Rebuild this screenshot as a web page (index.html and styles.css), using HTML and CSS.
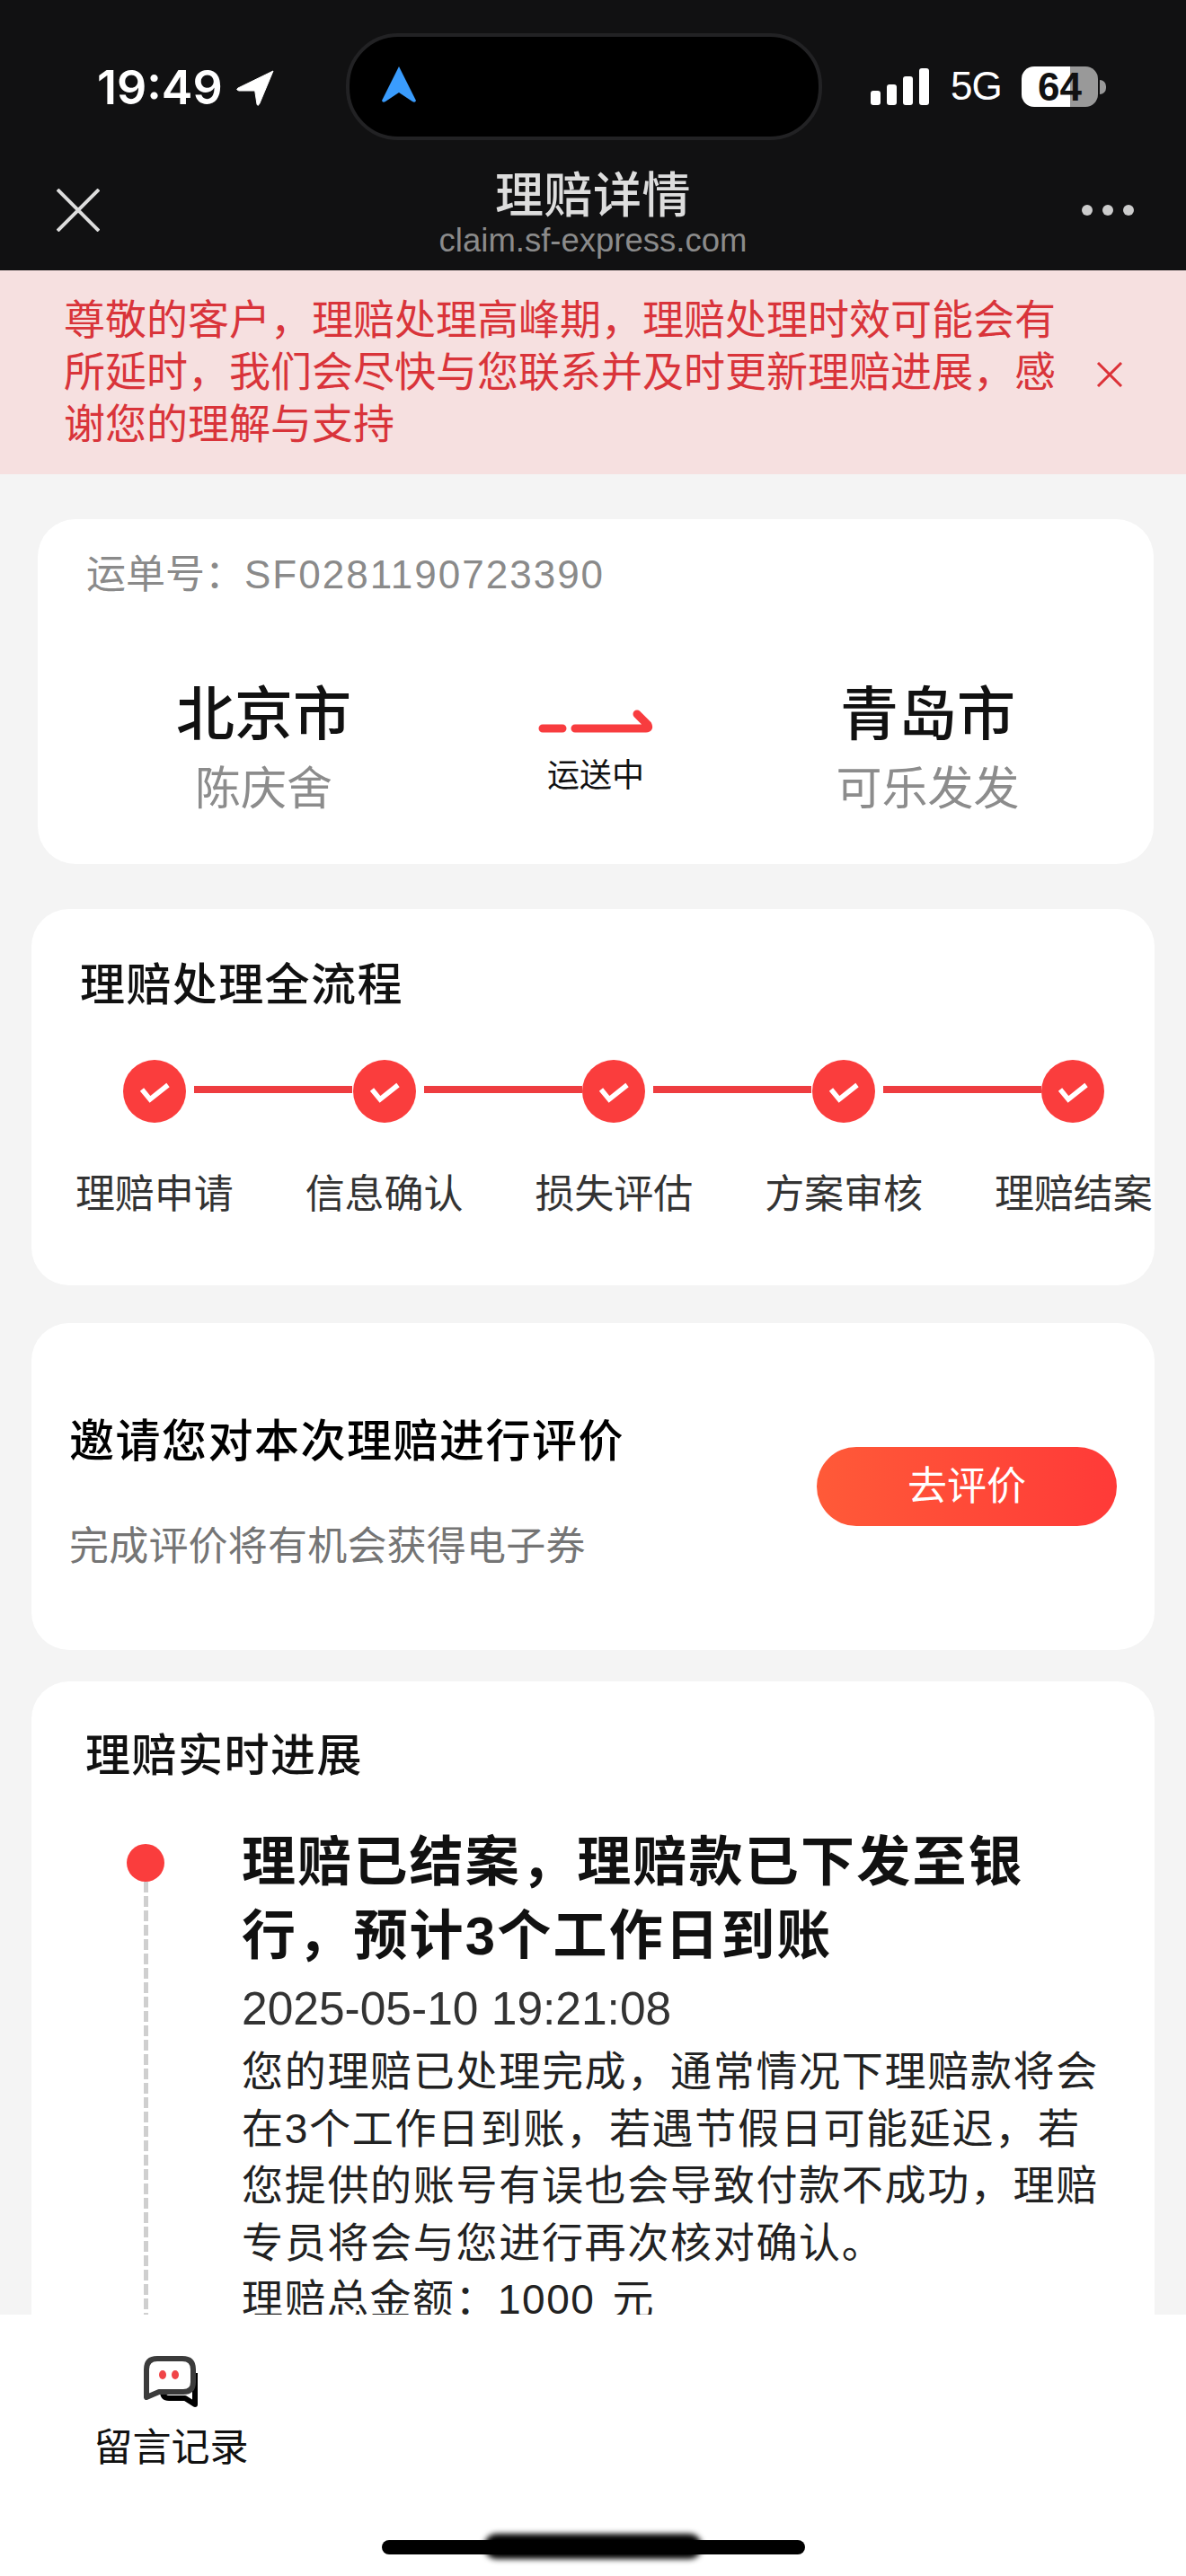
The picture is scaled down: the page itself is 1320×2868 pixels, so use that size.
FILE: index.html
```html
<!DOCTYPE html>
<html lang="zh-CN">
<head>
<meta charset="utf-8">
<title>理赔详情</title>
<link rel="stylesheet" href="styles.css">
</head>
<body>
<div class="app">
  <header class="top">
    <div class="status">
      <div class="status-left">
        <span class="time">19:49</span>
        <svg class="loc" viewBox="0 0 42 40"><path d="M41 1 L2 20 Q-1 22 3 23 L20 23 Q21 23 21 25 L23 38 Q24 41 26 37 Z" fill="#fff" stroke="#fff" stroke-width="1" stroke-linejoin="round"/></svg>
      </div>
      <div class="island">
        <svg class="nav-arrow" viewBox="0 0 38 41"><path d="M19 0 L38 38 Q37 41 34 39 L19 29 L4 39 Q1 41 0 38 Z" fill="#3a9cfd"/></svg>
      </div>
      <div class="status-right">
        <div class="signal"><i class="b1"></i><i class="b2"></i><i class="b3"></i><i class="b4"></i></div>
        <span class="net">5G</span>
        <div class="battery"><span class="batt-num">64</span></div>
        <div class="batt-nub"></div>
      </div>
    </div>
    <div class="navbar">
      <svg class="nav-close" viewBox="0 0 48 48"><path d="M1 1 L47 47 M47 1 L1 47" stroke="#ddd" stroke-width="4" fill="none"/></svg>
      <div class="nav-title">
        <div class="nav-name">理赔详情</div>
        <div class="nav-url">claim.sf-express.com</div>
      </div>
      <div class="nav-more"><i></i><i></i><i></i></div>
    </div>
  </header>

  <main class="main">
    <section class="notice">
      <p class="notice-text">尊敬的客户，理赔处理高峰期，理赔处理时效可能会有所延时，我们会尽快与您联系并及时更新理赔进展，感谢您的理解与支持</p>
      <svg class="notice-close" viewBox="0 0 30 28"><path d="M2 1 L28 27 M28 1 L2 27" stroke="#dc3238" stroke-width="3" fill="none"/></svg>
    </section>

    <section class="card card-way">
      <div class="waybill">运单号：<span class="waybill-no">SF0281190723390</span></div>
      <div class="route">
        <div class="place">
          <div class="city">北京市</div>
          <div class="person">陈庆舍</div>
        </div>
        <div class="transit">
          <svg class="transit-arrow" viewBox="0 0 128 30"><path d="M5 22 H27 M41 22 H120 Q124 22 122 18 L110 6" stroke="#f83c3f" stroke-width="9" stroke-linecap="round" stroke-linejoin="round" fill="none"/></svg>
          <div class="transit-text">运送中</div>
        </div>
        <div class="place">
          <div class="city">青岛市</div>
          <div class="person">可乐发发</div>
        </div>
      </div>
    </section>

    <section class="card card-flow">
      <h2 class="flow-title">理赔处理全流程</h2>
      <div class="flow-track">
        <span class="step-dot"><svg viewBox="0 0 70 70"><path d="M21 33 L30 44 L50 28" stroke="#fff" stroke-width="5.5" fill="none"/></svg></span><span class="step-line"></span>
        <span class="step-dot"><svg viewBox="0 0 70 70"><path d="M21 33 L30 44 L50 28" stroke="#fff" stroke-width="5.5" fill="none"/></svg></span><span class="step-line"></span>
        <span class="step-dot"><svg viewBox="0 0 70 70"><path d="M21 33 L30 44 L50 28" stroke="#fff" stroke-width="5.5" fill="none"/></svg></span><span class="step-line"></span>
        <span class="step-dot"><svg viewBox="0 0 70 70"><path d="M21 33 L30 44 L50 28" stroke="#fff" stroke-width="5.5" fill="none"/></svg></span><span class="step-line"></span>
        <span class="step-dot"><svg viewBox="0 0 70 70"><path d="M21 33 L30 44 L50 28" stroke="#fff" stroke-width="5.5" fill="none"/></svg></span>
      </div>
      <div class="flow-labels">
        <span>理赔申请</span><span>信息确认</span><span>损失评估</span><span>方案审核</span><span>理赔结案</span>
      </div>
    </section>

    <section class="card card-rate">
      <div class="rate-text">
        <div class="rate-title">邀请您对本次理赔进行评价</div>
        <div class="rate-sub">完成评价将有机会获得电子券</div>
      </div>
      <div class="rate-btn">去评价</div>
    </section>

    <section class="card card-progress">
      <h2 class="progress-title">理赔实时进展</h2>
      <div class="timeline">
        <div class="rail"><span class="rail-dot"></span><span class="rail-line"></span></div>
        <div class="event">
          <div class="event-head">理赔已结案，理赔款已下发至银行，预计3个工作日到账</div>
          <div class="event-time">2025-05-10 19:21:08</div>
          <p class="event-body">您的理赔已处理完成，通常情况下理赔款将会在3个工作日到账，若遇节假日可能延迟，若您提供的账号有误也会导致付款不成功，理赔专员将会与您进行再次核对确认。</p>
          <div class="event-amount">理赔总金额：<span class="amount-value">1000 元</span></div>
        </div>
      </div>
    </section>
  </main>

  <footer class="foot">
    <div class="tab">
      <svg class="tab-icon" viewBox="0 0 62 60">
        <path d="M57 20 V55 L46 48 H28 Q21 48 21 40" stroke="#000" stroke-width="6" fill="none" stroke-linejoin="round"/>
        <path d="M15 4 H43 Q55 4 55 16 V30 Q55 41 44 41 H17 L3 47 V16 Q3 4 15 4 Z" stroke="#3b3b3b" stroke-width="6" fill="#fff" stroke-linejoin="round"/>
        <ellipse cx="21" cy="22" rx="4" ry="5" fill="#f04548"/>
        <ellipse cx="35" cy="22" rx="4" ry="5" fill="#f04548"/>
      </svg>
      <span class="tab-label">留言记录</span>
    </div>
    <div class="home-bar"><span class="home-blur"></span></div>
  </footer>
</div>
</body>
</html>
```
FILE: styles.css
```css
* { box-sizing: border-box; }
html, body { margin: 0; padding: 0; }
body {
  width: 1320px;
  height: 2868px;
  overflow: hidden;
  background: #fff;
  font-family: "Liberation Sans", "Noto Sans CJK SC", sans-serif;
  color: #111;
}
h2, p { margin: 0; font-weight: inherit; }
i { display: block; }

.app { display: flex; flex-direction: column; height: 2868px; }

/* header */
.top { height: 301px; flex: none; background: #111112; color: #fff; }
.status { height: 188px; display: flex; align-items: flex-start; position: relative; }
.status-left { width: 385px; padding: 70px 0 0 108px; display: flex; gap: 13px; align-items: flex-start; }
.time { font-family: Inter, "Liberation Sans", sans-serif; font-size: 52px; line-height: 56px; font-weight: 600; width: 142px; white-space: nowrap; }
.loc { width: 42px; height: 40px; margin-top: 8px; flex: none; }
.island {
  width: 530px; height: 119px; margin-top: 37px; flex: none;
  background: #000; border: 4px solid #222224; border-radius: 58px;
  padding: 33px 0 0 36px;
}
.nav-arrow { display: block; width: 38px; height: 41px; }
.status-right { flex: 1; display: flex; align-items: flex-start; padding: 74px 0 0 54px; }
.signal { display: flex; gap: 7px; align-items: flex-end; height: 43px; width: 65px; flex: none; }
.signal i { width: 11px; background: #fff; border-radius: 3px; }
.b1 { height: 16px; }
.b2 { height: 23px; }
.b3 { height: 32px; }
.b4 { height: 41px; }
.net { margin-left: 24px; font-size: 44px; line-height: 44px; letter-spacing: -1px; width: 55px; flex: none; }
.battery {
  width: 85px; height: 45px; margin-left: 24px; flex: none; border-radius: 14px;
  background: linear-gradient(90deg, #fff 0, #fff 54px, #999 54px, #999 100%);
  text-align: center; color: #111; font-size: 44px; line-height: 45px; font-weight: 700;
}
.batt-num { display: block; }
.batt-nub { width: 7px; height: 16px; margin: 15px 0 0 2px; background: #999; border-radius: 0 8px 8px 0; flex: none; }

.navbar { height: 113px; position: relative; display: flex; }
.nav-close { position: absolute; left: 63px; top: 22px; width: 48px; height: 48px; }
.nav-title { flex: 1; text-align: center; }
.nav-name { font-size: 54px; line-height: 60px; height: 60px; color: #ddd; font-weight: 500; letter-spacing: 0.5px; }
.nav-url { font-size: 36.5px; line-height: 40px; color: #8b8b8b; }
.nav-more { position: absolute; left: 1204px; top: 40px; display: flex; gap: 11px; }
.nav-more i { width: 12px; height: 12px; border-radius: 50%; background: #ccc; }

/* scrolling content */
.main { height: 2276px; flex: none; overflow: hidden; background: #f4f4f4; }
.notice { height: 227px; background: #f6e0e0; display: flex; padding: 26px 0 0 71px; }
.notice-text { width: 1115px; font-size: 46px; line-height: 58px; color: #d9343a; flex: none; }
.notice-close { width: 30px; height: 28px; margin: 76px 0 0 34px; flex: none; }

.card { background: #fff; border-radius: 42px; margin: 0 35px 0 35px; }

.card-way { margin: 50px 36px 0 42px; height: 384px; padding-top: 32px; }
.waybill { padding-left: 54px; font-size: 44px; line-height: 60px; color: #8a8a8a; }
.waybill-no { letter-spacing: 2px; }
.route { display: grid; grid-template-columns: 1fr 236px 1fr; margin-top: 86px; }
.place { text-align: center; }
.city { font-size: 65px; line-height: 80px; font-weight: 500; color: #111; }
.person { font-size: 51px; line-height: 60px; margin-top: 13px; color: #8c8c8c; }
.transit { text-align: center; padding-top: 33px; }
.transit-arrow { display: block; width: 128px; height: 30px; margin: 0 auto 0 54px; }
.transit-text { font-size: 36px; line-height: 44px; margin-top: 23px; color: #111; }

.card-flow { margin-top: 50px; height: 419px; padding-top: 55px; }
.flow-title { padding-left: 54px; font-size: 50px; line-height: 60px; font-weight: 500; color: #111; letter-spacing: 1.4px; }
.flow-track { display: flex; align-items: flex-start; padding-left: 102px; margin-top: 53px; height: 70px; }
.step-dot { width: 70px; height: 70px; border-radius: 50%; background: #fa3d3d; flex: none; }
.step-dot svg { display: block; width: 70px; height: 70px; }
.step-line { width: 176px; height: 8px; margin: 29px 0 0 9px; background: #ee3d40; flex: none; margin-right: 0.5px; }
.flow-labels { display: flex; padding-left: 9px; margin-top: 50px; width: 1290px; }
.flow-labels span { width: 255.75px; text-align: center; font-size: 44px; line-height: 60px; color: #333; flex: none; }

.card-rate { margin-top: 42px; height: 364px; display: flex; align-items: flex-start; padding: 0 42px; }
.rate-text { flex: 1; padding-top: 100px; }
.rate-title { font-size: 50px; line-height: 64px; font-weight: 500; color: #000; letter-spacing: 1.5px; }
.rate-sub { font-size: 44px; line-height: 60px; margin-top: 55px; color: #757575; letter-spacing: 0.2px; }
.rate-btn {
  width: 334px; height: 88px; margin-top: 138px; border-radius: 44px; flex: none;
  background: linear-gradient(90deg, #ff5a38, #ff3a38);
  color: #fff; font-size: 44px; line-height: 88px; text-align: center;
}

.card-progress { margin-top: 35px; padding-top: 53px; height: 1200px; }
.progress-title { padding-left: 60px; font-size: 50px; line-height: 60px; font-weight: 500; color: #111; letter-spacing: 1.5px; }
.timeline { display: flex; margin: 48px 0 0 106px; gap: 86px; }
.rail { width: 42px; flex: none; display: flex; flex-direction: column; align-items: center; padding-top: 20px; }
.rail-dot { width: 42px; height: 42px; border-radius: 50%; background: #fa3d3d; flex: none; }
.rail-line { width: 5px; flex: 1; background: repeating-linear-gradient(180deg, #cfcfcf 0, #cfcfcf 12px, #fff 12px, #fff 16px); }
.event { width: 965px; flex: none; }
.event-head { font-size: 60px; line-height: 82px; font-weight: 700; color: #111; letter-spacing: 2.2px; width: 880px; }
.event-time { font-size: 51.5px; line-height: 60px; margin-top: 9px; color: #333; }
.event-body { font-size: 46px; line-height: 63.5px; color: #222; margin-top: 9px; letter-spacing: 1.7px; }
.event-amount { font-size: 46px; line-height: 63.5px; color: #222; letter-spacing: 1.5px; }
.amount-value { word-spacing: 5px; }

/* footer */
.foot { flex: 1; background: #fff; position: relative; }
.tab { width: 171px; margin: 45px 0 0 105px; display: flex; flex-direction: column; align-items: center; }
.tab-icon { width: 62px; height: 60px; display: block; }
.tab-label { font-size: 43px; line-height: 60px; margin-top: 13px; color: #111; white-space: nowrap; }
.home-bar { width: 471px; height: 16px; background: #000; border-radius: 8px; position: absolute; left: 425px; top: 251px; }
.home-blur { position: absolute; left: 114px; top: -7px; width: 242px; height: 28px; border-radius: 14px; background: #000; filter: blur(3px); }
```
